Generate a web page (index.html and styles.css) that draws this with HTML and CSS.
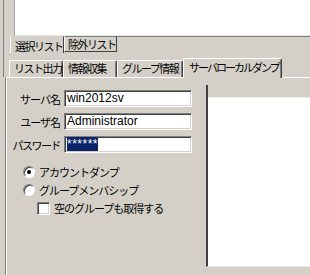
FILE: index.html
```html
<!DOCTYPE html>
<html lang="ja">
<head>
  <meta charset="UTF-8" />
  <title>サーバローカルダンプ</title>
  <link rel="stylesheet" href="styles.css">
</head>
<body>

  <div class="upper">
    <div class="listtop"></div>

    <div class="tabs1">
      <span class="tab1 tab1-on">選択リスト</span>
      <span class="tab1">除外リスト</span>
      <span class="tab1-rest"></span>
    </div>

    <div class="tabs2">
      <span class="tab2 w-list">リスト出力</span>
      <span class="tab2 w-info">情報収集</span>
      <span class="tab2 w-group">グループ情報</span>
      <span class="tab2 tab2-on">サーバローカルダンプ</span>
    </div>
  </div>

  <div class="panel">
    <div class="form">
      <div class="row">
        <label>サーバ名</label>
        <span class="field">win2012sv</span>
      </div>
      <div class="row">
        <label>ユーザ名</label>
        <span class="field">Administrator</span>
      </div>
      <div class="row">
        <label class="tight">パスワード</label>
        <span class="field"><span class="sel">******</span></span>
      </div>

      <div class="opt opt-first">
        <span class="radio radio-on"></span>アカウントダンプ
      </div>
      <div class="opt">
        <span class="radio"></span>グループメンバシップ
      </div>
      <div class="opt opt-sub">
        <span class="check"></span>空のグループも取得する
      </div>
    </div>

    <div class="listbox">
      <div class="lv-head"></div>
    </div>
  </div>

</body>
</html>
```

FILE: styles.css
```css
* {
  box-sizing: border-box;
}

body {
  margin: 0;
  width: 310px;
  height: 275px;
  overflow: hidden;
  background-color: #d4d0c8;
  font-family: "Noto Sans CJK JP", sans-serif;
  font-size: 11px;
  letter-spacing: -1px;
  white-space: nowrap;
  color: #000;
}

.upper {
  margin-left: 3px;
  border-left: 1px solid #808080;
  height: 77px;
}

.listtop {
  margin-left: 10px;
  height: 36px;
  background: white;
  border-left: 1px solid #a0a0a0;
  border-bottom: 1px solid #e8e6e2;
}

/* bottom tabs of the outer control */
.tabs1 {
  display: flex;
  height: 17px;
  padding-left: 6px;
  letter-spacing: -1.5px;
}

.tab1 {
  width: 53px;
  height: 16px;
  line-height: 14px;
  padding-left: 3px;
  border-top: 1px solid #808080;
  border-left: 1px solid white;
  border-right: 1px solid #404040;
  border-bottom: 1px solid #404040;
}

.tab1-on {
  width: 54px;
  height: 17px;
  padding-top: 2px;
  padding-left: 4px;
  border-top-color: transparent;
  border-bottom: none;
}

.tab1-rest {
  flex: 1;
  border-top: 1px solid #808080;
}

/* top tabs of the inner control */
.tabs2 {
  display: flex;
  align-items: flex-end;
  height: 24px;
  padding-left: 5px;
  letter-spacing: -1.5px;
}

.tab2 {
  height: 17px;
  line-height: 15px;
  padding-left: 4px;
  border-top: 1px solid white;
  border-left: 1px solid white;
  border-right: 1px solid #404040;
  box-shadow: inset -1px 0 #808080;
  border-radius: 2px 2px 0 0;
}

.w-list {
  width: 54px;
}

.w-info {
  width: 54px;
}

.w-group {
  width: 66px;
}

.tab2-on {
  width: 99px;
  height: 20px;
  padding-left: 5px;
  padding-top: 1px;
  margin-bottom: -1px;
  letter-spacing: -2px;
  position: relative;
  background: #d4d0c8;
}

.panel {
  margin-left: 6px;
  height: 198px;
  border-top: 1px solid white;
  border-left: 1px solid white;
  box-shadow: -1px 0 #808080;
  display: flex;
  padding-top: 7px;
}

.form {
  width: 186px;
}

.row {
  display: flex;
  align-items: center;
  height: 17px;
  margin-bottom: 6px;
}

.row:first-child {
  margin-top: 5px;
}

.row label {
  width: 53px;
  text-align: right;
  margin-right: 4px;
}

.row .tight {
  letter-spacing: -1.5px;
}

.field {
  width: 128px;
  height: 17px;
  line-height: 13px;
  background: white;
  border: 1px solid;
  border-color: #808080 white white #808080;
  box-shadow: inset 1px 1px #404040, inset -1px -1px #d4d0c8;
  padding: 1px 2px;
  font-family: "Liberation Sans", sans-serif;
  font-size: 12px;
  letter-spacing: 0;
}

.sel {
  background: #0a246a;
  color: white;
  letter-spacing: 0.5px;
}

.opt {
  display: flex;
  align-items: center;
  height: 16px;
  margin-left: 16px;
  margin-bottom: 2px;
}

.opt-first {
  margin-top: 11px;
}

.opt-sub {
  margin-left: 30px;
  margin-top: 1px;
}

.radio {
  width: 12px;
  height: 12px;
  border-radius: 50%;
  background: white;
  border: 1px solid;
  border-color: #808080 white white #808080;
  box-shadow: inset 1px 1px #404040;
  margin-right: 4px;
  position: relative;
}

.radio-on::after {
  content: "";
  position: absolute;
  left: 3px;
  top: 3px;
  width: 4px;
  height: 4px;
  border-radius: 50%;
  background: black;
}

.check {
  width: 13px;
  height: 13px;
  background: white;
  border: 1px solid;
  border-color: #808080 white white #808080;
  box-shadow: inset 1px 1px #404040, inset -1px -1px #d4d0c8;
  margin-right: 4px;
}

.listbox {
  flex: 1;
  margin-left: 13px;
  height: 182px;
  background: white;
  border-left: 2px solid #404040;
  border-bottom: 1px solid #e8e6e2;
}

.lv-head {
  height: 13px;
  background: #d4d0c8;
  border-bottom: 1px solid #f0eeea;
}
```
